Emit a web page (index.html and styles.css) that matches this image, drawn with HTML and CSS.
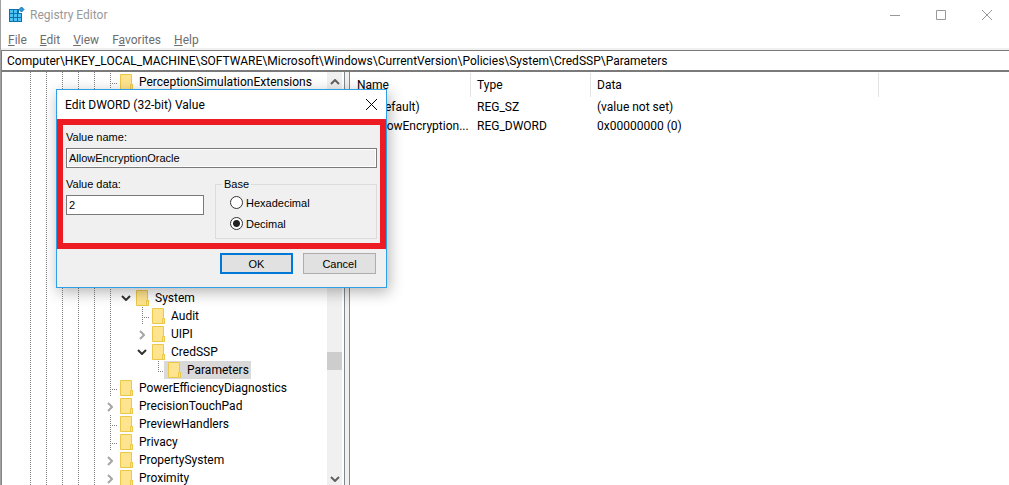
FILE: index.html
```
<!DOCTYPE html>
<html lang="en">
<head>
    <meta charset="utf-8">
    <meta name="viewport" content="width=device-width, initial-scale=1">
    <title>Registry Editor</title>
    <link rel="stylesheet" href="styles.css">
</head>

<body>
    <!-- shared icons -->
    <svg class="defs" width="0" height="0">
        <symbol id="folder" viewBox="0 0 13 16">
            <path d="M.5 .5h11v10h1v5H.5z" fill="#ffe48f" stroke="#ecc849"/>
            <path d="M10.500 15v-4.500h2V15.500h-2z" fill="#ffe48f" stroke="#ecc849"/>
        </symbol>
        <symbol id="right" viewBox="0 0 6 10">
            <path d="M1 1l4 4-4 4" fill="none" stroke="#a6a6a6" stroke-width="2"/>
        </symbol>
        <symbol id="down" viewBox="0 0 10 6">
            <path d="M1 1l4 4 4-4" fill="none" stroke="currentColor" stroke-width="2"/>
        </symbol>
    </svg>

    <div class="window">
        <header class="titlebar">
            <svg class="app-icon" viewBox="0 0 16 16" width="16" height="16">
                <path d="M0 2h10v4h3v9H0z" fill="#0b70ae"/>
                <path d="M1 3h3v3H1zM5 3h3v3H5zM1 7h3v3H1zM5 7h3v3H5zM9 7h3v3H9zM1 11h3v3H1zM5 11h3v3H5zM9 11h3v3H9z" fill="#4cc2f5"/>
                <path d="M12.500 0l2.500 2.500L12.500 5 10 2.500z" fill="#2c9bd6" stroke="#0b70ae"/>
            </svg>
            <h1>Registry Editor</h1>
            <div class="caption-buttons">
                <button aria-label="Minimize"><svg width="10" height="10"><path d="M0 5.500h10"/></svg></button>
                <button aria-label="Maximize"><svg width="10" height="10"><path d="M.5 .5h9v9h-9z"/></svg></button>
                <button aria-label="Close"><svg width="10" height="10"><path d="M0 0l10 10M10 0L0 10"/></svg></button>
            </div>
        </header>

        <nav class="menu">
            <a href="#"><u>F</u>ile</a>
            <a href="#"><u>E</u>dit</a>
            <a href="#"><u>V</u>iew</a>
            <a href="#">F<u>a</u>vorites</a>
            <a href="#"><u>H</u>elp</a>
        </nav>

        <input class="address" type="text" aria-label="Address" value="Computer\HKEY_LOCAL_MACHINE\SOFTWARE\Microsoft\Windows\CurrentVersion\Policies\System\CredSSP\Parameters">

        <main class="panes">
            <section class="tree-pane">
                <ul class="tree">
                    <li><i class="line tee"></i><svg class="folder"><use href="#folder"/></svg><span>PerceptionSimulationExtensions</span></li>
                    <li class="covered"><i class="line"></i><i class="line"></i></li>
                    <li><i class="line"></i><i class="open"><svg><use href="#down"/></svg></i><svg class="folder"><use href="#folder"/></svg><span>System</span></li>
                    <li><i class="line"></i><i></i><i class="line tee"></i><svg class="folder"><use href="#folder"/></svg><span>Audit</span></li>
                    <li><i class="line"></i><i></i><i class="closed"><svg><use href="#right"/></svg></i><svg class="folder"><use href="#folder"/></svg><span>UIPI</span></li>
                    <li><i class="line"></i><i></i><i class="open"><svg><use href="#down"/></svg></i><svg class="folder"><use href="#folder"/></svg><span>CredSSP</span></li>
                    <li><i class="line"></i><i></i><i></i><i class="line tee last"></i><b class="selected"><svg class="folder"><use href="#folder"/></svg><span>Parameters</span></b></li>
                    <li><i class="line tee"></i><svg class="folder"><use href="#folder"/></svg><span>PowerEfficiencyDiagnostics</span></li>
                    <li><i class="closed"><svg><use href="#right"/></svg></i><svg class="folder"><use href="#folder"/></svg><span>PrecisionTouchPad</span></li>
                    <li><i class="line tee"></i><svg class="folder"><use href="#folder"/></svg><span>PreviewHandlers</span></li>
                    <li><i class="line tee"></i><svg class="folder"><use href="#folder"/></svg><span>Privacy</span></li>
                    <li><i class="closed"><svg><use href="#right"/></svg></i><svg class="folder"><use href="#folder"/></svg><span>PropertySystem</span></li>
                    <li><i class="closed"><svg><use href="#right"/></svg></i><svg class="folder"><use href="#folder"/></svg><span>Proximity</span></li>
                </ul>
                <div class="scrollbar">
                    <svg class="up"><use href="#down"/></svg>
                    <div class="thumb"></div>
                    <svg><use href="#down"/></svg>
                </div>
            </section>

            <div class="splitter"></div>

            <section class="list-pane">
                <table>
                    <colgroup><col class="col-name"><col class="col-type"><col class="col-data"><col></colgroup>
                    <thead>
                        <tr><th>Name</th><th>Type</th><th>Data</th><td></td></tr>
                    </thead>
                    <tbody>
                        <tr><td class="name">(Default)</td><td>REG_SZ</td><td>(value not set)</td><td></td></tr>
                        <tr><td class="name">AllowEncryption...</td><td>REG_DWORD</td><td>0x00000000 (0)</td><td></td></tr>
                    </tbody>
                </table>
            </section>
        </main>

        <form class="dialog" role="dialog" aria-labelledby="dialog-title">
            <header>
                <h2 id="dialog-title">Edit DWORD (32-bit) Value</h2>
                <button type="button" aria-label="Close dialog"><svg width="11" height="11"><path d="M0 0l11 11M11 0L0 11"/></svg></button>
            </header>
            <div class="fields">
                <label for="value-name">Value name:</label>
                <input id="value-name" type="text" value="AllowEncryptionOracle" readonly>
                <div class="row">
                    <div class="data">
                        <label for="value-data">Value data:</label>
                        <input id="value-data" type="text" value="2">
                    </div>
                    <fieldset>
                        <legend>Base</legend>
                        <label class="choice"><input type="radio" name="base">Hexadecimal</label>
                        <label class="choice"><input type="radio" name="base" checked>Decimal</label>
                    </fieldset>
                </div>
            </div>
            <footer>
                <button type="button" class="default">OK</button>
                <button type="button">Cancel</button>
            </footer>
        </form>
    </div>
</body>
</html>
```
FILE: styles.css
```
* {
    box-sizing: border-box;
}

body {
    margin: 0;
    font-family: Roboto, "Open Sans", sans-serif;
    font-size: 12px;
    line-height: 18px;
    color: #000;
    background: #fff;
}

button, input {
    font: inherit;
    color: inherit;
}

h1, h2 {
    margin: 0;
    font-size: 12px;
    font-weight: normal;
}

.defs {
    position: absolute;
}

.window {
    position: relative;
    display: flex;
    flex-direction: column;
    height: 100vh;
    overflow: hidden;
    border-left: 1px solid #a0a0a0;
}

/* title bar and menu */
.titlebar {
    display: flex;
    align-items: center;
    flex: none;
    height: 30px;
    padding-left: 8px;
    color: #999;
}

.titlebar h1 {
    margin-left: 5px;
}

.caption-buttons {
    display: flex;
    margin-left: auto;
}

.caption-buttons button {
    width: 46px;
    height: 28px;
    padding: 0 0 0 2px;
    border: 0;
    background: none;
}

.caption-buttons svg {
    display: block;
    margin: auto;
    fill: none;
    stroke: #999;
}

.menu {
    display: flex;
    flex: none;
    gap: 13px;
    height: 21px;
    padding: 1px 7px 0;
    border-bottom: 3px solid #f0f0f0;
}

.menu a {
    color: #6d6d6d;
    text-decoration: none;
}

.address {
    flex: none;
    width: 100%;
    height: 22px;
    margin-top: -1px;
    padding: 0 5px;
    border: 1px solid #7a7a7a;
    border-width: 1px 0 2px 1px;
    outline: 0;
}

/* panes */
.panes {
    display: flex;
    flex: 1;
    min-height: 0;
    border-left: 1px solid #828790;
}

.tree-pane {
    display: flex;
    flex: none;
    width: 342px;
    padding-right: 2px;
    overflow: hidden;
}

.tree {
    flex: 1;
    height: 430px;
    margin: 0;
    padding: 1px 0 0 100px;
    list-style: none;
    background: repeating-linear-gradient(#808080 0 1px, #fff 1px 2px) 28px 0 / 1px 100% no-repeat,
        repeating-linear-gradient(#808080 0 1px, #fff 1px 2px) 44px 0 / 1px 100% no-repeat,
        repeating-linear-gradient(#808080 0 1px, #fff 1px 2px) 60px 0 / 1px 100% no-repeat,
        repeating-linear-gradient(#808080 0 1px, #fff 1px 2px) 76px 0 / 1px 100% no-repeat,
        repeating-linear-gradient(#808080 0 1px, #fff 1px 2px) 92px 0 / 1px 100% no-repeat;
}

.tree li {
    display: flex;
    align-items: center;
    height: 18px;
    white-space: nowrap;
}

.tree li.covered {
    height: 198px;
}

.tree i {
    display: flex;
    align-items: center;
    justify-content: center;
    flex: none;
    width: 16px;
    height: 100%;
}

.tree .line {
    background: repeating-linear-gradient(#808080 0 1px, #fff 1px 2px) 8px 0 / 1px 100% no-repeat;
}

.tree .tee {
    background: repeating-linear-gradient(#808080 0 1px, #fff 1px 2px) 8px 0 / 1px 100% no-repeat,
        repeating-linear-gradient(90deg, #808080 0 1px, #fff 1px 2px) 8px 10px / 8px 1px no-repeat;
}

.tree .last {
    background-size: 1px 10px, 6px 1px;
}

.open svg {
    width: 10px;
    height: 6px;
    color: #333;
}

.closed svg {
    width: 6px;
    height: 10px;
    margin-top: 2px;
}

.folder {
    flex: none;
    width: 13px;
    height: 16px;
    margin: 0 6px 0 2px;
}

.selected {
    display: flex;
    align-items: center;
    height: 18px;
    margin-left: -2px;
    padding: 0 2px;
    font-weight: normal;
    background: #d9d9d9;
}

.scrollbar {
    display: flex;
    flex-direction: column;
    align-items: center;
    justify-content: space-between;
    width: 15px;
    padding: 7px 0 3px;
    background: #f0f0f0;
    color: #606060;
}

.scrollbar svg {
    width: 10px;
    height: 6px;
}

.scrollbar .up {
    transform: rotate(180deg);
}

.thumb {
    width: 100%;
    height: 18px;
    margin-top: 160px;
    background: #cdcdcd;
}

.splitter {
    flex: none;
    width: 6px;
    border: 1px solid #828790;
    border-width: 0 1px;
    background: #f0f0f0;
}

.list-pane {
    flex: 1;
    min-width: 0;
}

.list-pane table {
    width: 100%;
    table-layout: fixed;
    border-collapse: separate;
    border-spacing: 0 1px;
}

.col-name { width: 121px; }
.col-type { width: 120px; }
.col-data { width: 288px; }

.list-pane th, .list-pane td {
    padding: 0 6px;
    font-weight: normal;
    text-align: left;
    white-space: nowrap;
}

.list-pane th {
    height: 24px;
    border-right: 1px solid #e2e2e2;
}

.list-pane th:first-child {
    padding-left: 7px;
}

.list-pane .name {
    padding: 0 0 0 23px;
}

/* edit dialog */
.dialog {
    position: absolute;
    top: 89px;
    left: 55px;
    width: 331px;
    border: 1px solid #2f9fe8;
    background: #f0f0f0;
    box-shadow: 2px 4px 14px rgba(0, 0, 0, .3);
    font-family: "Liberation Sans", sans-serif;
    font-size: 11px;
    line-height: 16px;
}

.dialog header {
    display: flex;
    align-items: center;
    justify-content: space-between;
    height: 29px;
    padding: 0 8px;
    background: #fff;
    font-family: Roboto, "Open Sans", sans-serif;
}

.dialog header button {
    padding: 0 1px;
    border: 0;
    background: none;
}

.dialog header svg {
    display: block;
    stroke: #000;
}

.fields {
    height: 130px;
    padding: 4px 3px;
    border: 6px solid #ed1c24;
}

.fields label {
    display: block;
}

.fields input[type="text"] {
    display: block;
    width: 100%;
    height: 20px;
    margin-top: 3px;
    padding: 0 2px;
    border: 1px solid #7a7a7a;
    outline: 0;
    background: #fff;
}

.fields input[readonly] {
    background: #f0f0f0;
    box-shadow: inset 0 0 0 1px #fff;
}

.row {
    display: flex;
    gap: 11px;
    margin-top: 8px;
}

.data {
    width: 138px;
}

fieldset {
    flex: 1;
    height: 63px;
    margin: 0;
    padding: 0 14px;
    border: 1px solid #dcdcdc;
}

legend {
    margin-left: -8px;
    padding: 0 2px;
}

.fields .choice {
    display: flex;
    align-items: center;
    gap: 3px;
    height: 21px;
}

input[type="radio"] {
    appearance: none;
    width: 13px;
    height: 13px;
    margin: 0;
    border: 1px solid #333;
    border-radius: 50%;
    background: #fff;
}

input[type="radio"]:checked {
    background: radial-gradient(circle, #222 0 3px, #fff 4px);
}

.dialog footer {
    display: flex;
    justify-content: flex-end;
    gap: 10px;
    padding: 4px 10px 13px;
}

.dialog footer button {
    width: 73px;
    height: 21px;
    padding: 0;
    border: 1px solid #adadad;
    background: #e1e1e1;
}

.dialog footer .default {
    border: 2px solid #0078d7;
}
```
